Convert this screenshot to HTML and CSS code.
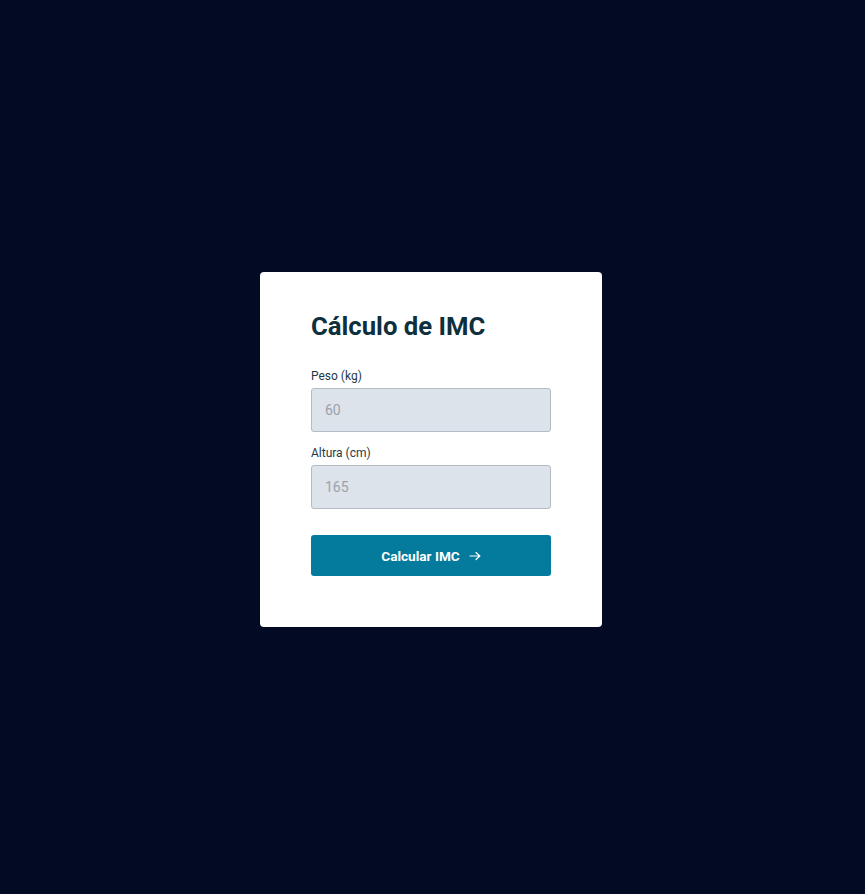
FILE: index.html
```html
<!DOCTYPE html>
<html lang="pt">
<head>
<meta charset="utf-8">
<title>Cálculo de IMC</title>
<link rel="stylesheet" href="styles.css">
</head>
<body>
<main class="page">
  <form class="card">
    <h1 class="title">Cálculo de IMC</h1>
    <label class="label" for="peso">Peso (kg)</label>
    <input class="input" id="peso" type="text" placeholder="60">
    <label class="label" for="altura">Altura (cm)</label>
    <input class="input" id="altura" type="text" placeholder="165">
    <button class="btn" type="button">Calcular IMC <span class="arrow">
      <svg width="12" height="10" viewBox="0 0 12 10" fill="none" stroke="#fff" stroke-width="1.2" stroke-linecap="round" stroke-linejoin="round"><path d="M1 5h10M7 1.5L10.8 5 7 8.5"/></svg>
    </span></button>
  </form>
</main>
</body>
</html>
```
FILE: styles.css
```css
* { box-sizing: border-box; }
html, body { margin: 0; height: 100%; }
body {
  background: #020a24;
  font-family: Roboto, "Noto Sans", sans-serif;
}
.page {
  min-height: 100%;
  display: flex;
  align-items: center;
  justify-content: center;
  padding: 5px 3px 0 0;
}
.card {
  width: 342px;
  background: #fff;
  border-radius: 4px;
  padding: 38px 51px 51px;
  display: flex;
  flex-direction: column;
}
.title {
  margin: 0 0 27px;
  font-size: 25.7px;
  line-height: 32px;
  font-weight: 700;
  color: #0e2f3d;
}
.label {
  font-size: 12px;
  line-height: 14px;
  color: #1f3a45;
  margin-bottom: 5px;
}
.input {
  height: 44px;
  width: 100%;
  border: 1px solid #b4bbc4;
  border-radius: 3px;
  background: #dde3ea;
  padding: 0 13px;
  font-family: inherit;
  font-size: 14px;
  color: #333;
  margin-bottom: 14px;
  outline: none;
}
.input::placeholder { color: #9aa2ab; }
.btn {
  margin-top: 12px;
  height: 41px;
  width: 100%;
  border: 0;
  border-radius: 3px;
  background: #047a9c;
  color: #fff;
  font-family: inherit;
  font-size: 13.6px;
  font-weight: 700;
  display: flex;
  align-items: center;
  justify-content: center;
  gap: 9px;
}
.arrow { display: inline-flex; margin-top: 1px; }
```
